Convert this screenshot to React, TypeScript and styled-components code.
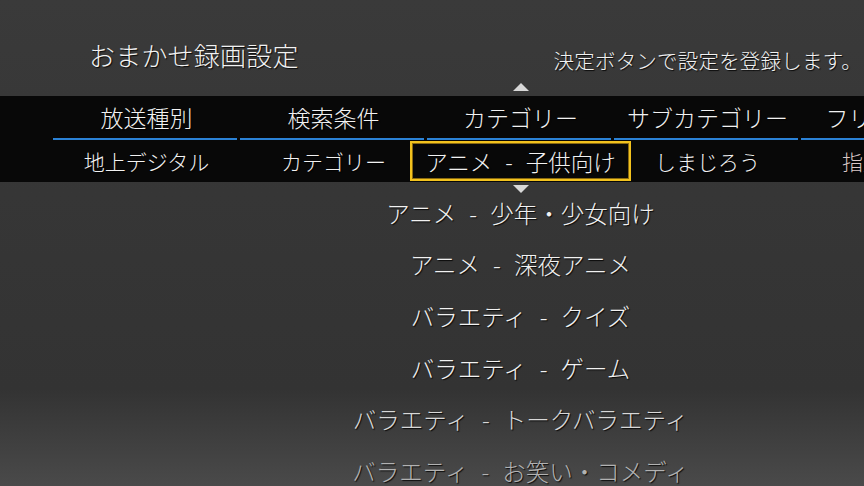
import React from "react";
import styled, { createGlobalStyle } from "styled-components";

const Global = createGlobalStyle`
  html, body { margin: 0; padding: 0; background: #363636; }
  body { font-family: "Noto Sans CJK JP", "Noto Sans", sans-serif; font-weight: 300; }
  * { box-sizing: border-box; }
`;

const Screen = styled.div`
  width: 864px;
  height: 486px;
  overflow: hidden;
  position: relative;
  background: linear-gradient(to bottom, #3a3a3a 0%, #363636 40%, #333333 80%, #4a4a4a 100%);
  color: #f2f2f2;
  text-shadow: 1px 1px 1px rgba(0, 0, 0, 0.85);
`;

const TopBar = styled.div`
  height: 96px;
  display: flex;
  justify-content: space-between;
  align-items: flex-start;
  padding: 39px 2px 0 89px;
`;

const Title = styled.h1`
  margin: 0;
  font-size: 26px;
  font-weight: 300;
  line-height: 32px;
  letter-spacing: 0.2px;
`;

const Hint = styled.div`
  margin-top: 9px;
  font-size: 20.5px;
  line-height: 24px;
  letter-spacing: 0.2px;
`;

const Band = styled.div`
  height: 86px;
  background: #080808;
  display: grid;
  grid-template-columns: repeat(5, 187px);
  padding-left: 53px;
  overflow: hidden;
`;

const Column = styled.div<{ $active?: boolean }>`
  position: relative;
  display: flex;
  flex-direction: column;
  min-width: 0;
  z-index: ${(p) => (p.$active ? 2 : 1)};
`;

const Header = styled.div`
  height: 42px;
  line-height: 42px;
  font-size: 23px;
  text-align: center;
  white-space: nowrap;
`;

const Underline = styled.div`
  height: 2px;
  margin-right: 3px;
  background: #2b82d6;
`;

const Value = styled.div<{ $dim?: boolean }>`
  position: relative;
  height: 42px;
  display: flex;
  justify-content: center;
  align-items: center;
  font-size: 21px;
  white-space: nowrap;
  color: ${(p) => (p.$dim ? "#d9c7c7" : "#f2f2f2")};
`;

const SelectBox = styled.div`
  position: absolute;
  left: -17px;
  top: 1px;
  width: 221px;
  height: 40px;
  border: 2px solid #f2c21e;
  box-shadow: inset 0 0 0 1px #8a6a10;
  background: #080808;
  display: flex;
  justify-content: center;
  align-items: center;
  font-size: 22.5px;
`;

const Arrow = styled.div<{ $dir: "up" | "down" }>`
  position: absolute;
  left: 50%;
  margin-left: -8px;
  width: 0;
  height: 0;
  border-left: 8px solid transparent;
  border-right: 8px solid transparent;
  ${(p) =>
    p.$dir === "up"
      ? "top: -13px; border-bottom: 8px solid #d8d8d8;"
      : "top: 3px; border-top: 8px solid #d8d8d8;"}
`;

const ArrowLayer = styled.div`
  position: relative;
  margin-left: 427px;
  width: 187px;
  height: 0;
  z-index: 3;
`;

const List = styled.div`
  margin-left: 427px;
  width: 187px;
  padding-top: 5px;
  display: flex;
  flex-direction: column;
`;

const Row = styled.div<{ $tone: number }>`
  height: 51.6px;
  display: flex;
  justify-content: center;
  align-items: center;
  white-space: nowrap;
  font-size: 23.5px;
  color: ${(p) => ["#f2f2f2", "#d8d8d8", "#b2b2b2"][p.$tone]};
`;

const Dash = styled.span`
  padding: 0 13px;
`;

const Label = ({ text }: { text: string }) => {
  const [a, b] = text.split(" - ");
  return (
    <>
      {a}
      <Dash>-</Dash>
      {b}
    </>
  );
};

const columns = [
  { head: "放送種別", value: "地上デジタル" },
  { head: "検索条件", value: "カテゴリー" },
  { head: "カテゴリー", value: "アニメ - 子供向け", active: true },
  { head: "サブカテゴリー", value: "しまじろう" },
  { head: "フリーワード", value: "指定しない", dim: true },
];

const rows = [
  { text: "アニメ - 少年・少女向け", tone: 0 },
  { text: "アニメ - 深夜アニメ", tone: 0 },
  { text: "バラエティ - クイズ", tone: 0 },
  { text: "バラエティ - ゲーム", tone: 0 },
  { text: "バラエティ - トークバラエティ", tone: 1 },
  { text: "バラエティ - お笑い・コメディ", tone: 2 },
];

export default function App() {
  return (
    <Screen>
      <Global />
      <TopBar>
        <Title>おまかせ録画設定</Title>
        <Hint>決定ボタンで設定を登録します。</Hint>
      </TopBar>
      <ArrowLayer>
        <Arrow $dir="up" />
      </ArrowLayer>
      <Band>
        {columns.map((c) => (
          <Column key={c.head} $active={c.active}>
            <Header>{c.head}</Header>
            <Underline />
            <Value $dim={c.dim}>
              {c.active ? (
                <SelectBox>
                  <Label text={c.value} />
                </SelectBox>
              ) : (
                c.value
              )}
            </Value>
          </Column>
        ))}
      </Band>
      <ArrowLayer>
        <Arrow $dir="down" />
      </ArrowLayer>
      <List>
        {rows.map((r) => (
          <Row key={r.text} $tone={r.tone}>
            <Label text={r.text} />
          </Row>
        ))}
      </List>
    </Screen>
  );
}
